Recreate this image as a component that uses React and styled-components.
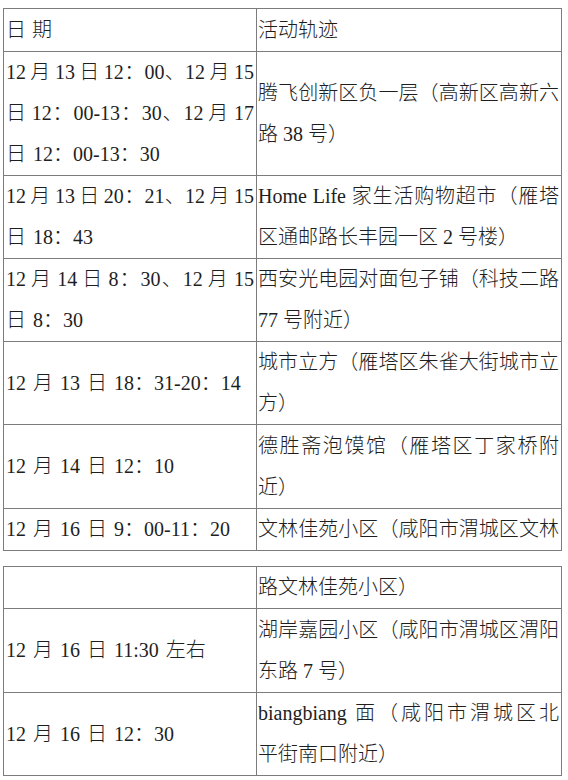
import React from "react";
import styled, { createGlobalStyle } from "styled-components";

const GlobalStyle = createGlobalStyle`
  html, body { margin: 0; padding: 0; background: #ffffff; }
  body {
    font-family: "Liberation Serif", "Noto Sans CJK SC", serif;
    color: #1e1e1e;
  }
`;

const Page = styled.div`
  width: 568px;
  height: 780px;
  box-sizing: border-box;
  padding: 8px 0 0 3px;
  display: flex;
  flex-direction: column;
  gap: 15px;
  overflow: hidden;
`;

const Sheet = styled.div`
  display: grid;
  grid-template-columns: 252px 304px;
  gap: 1px;
  width: max-content;
  background: #7c7c7c;
  border: 1px solid #7c7c7c;
`;

const Cell = styled.div`
  background: #ffffff;
  display: flex;
  flex-direction: column;
  justify-content: center;
  min-height: ${(p) => p.$min || 41}px;
  box-sizing: border-box;
  min-width: 0;
`;

const DateCell = styled(Cell)`
  padding: 0 2px 0 2px;
`;

const PlaceCell = styled(Cell)`
  padding: 0 2px 0 1px;
`;

const Line = styled.span`
  display: block;
  white-space: nowrap;
  font-size: 20px;
  font-weight: 300;
  line-height: 41px;
  text-align: left;
  text-align-last: ${(p) => (p.$full ? "justify" : "auto")};
  word-spacing: ${(p) => p.$ws || 0}px;
  letter-spacing: ${(p) => p.$ls || 0}px;
`;

const L = (text, full = false, ls = 0) => ({ text, full, ls });

const first = [
  {
    min: 42,
    date: [L("日期", false, 6)],
    place: [L("活动轨迹")],
  },
  {
    date: [
      L("12 月 13 日 12：00、12 月 15", true),
      L("日 12：00-13：30、12 月 17", true),
      L("日 12：00-13：30"),
    ],
    place: [L("腾飞创新区负一层（高新区高新六", true), L("路 38 号）")],
  },
  {
    date: [L("12 月 13 日 20：21、12 月 15", true), L("日 18：43")],
    place: [L("Home Life 家生活购物超市（雁塔", true), L("区通邮路长丰园一区 2 号楼）")],
  },
  {
    date: [L("12 月 14 日 8：30、12 月 15", true), L("日 8：30")],
    place: [L("西安光电园对面包子铺（科技二路", true), L("77 号附近）")],
  },
  {
    date: [L("12 月 13 日 18：31-20：14")],
    place: [L("城市立方（雁塔区朱雀大街城市立", true), L("方）")],
  },
  {
    min: 83,
    date: [L("12 月 14 日 12：10")],
    place: [L("德胜斋泡馍馆（雁塔区丁家桥附", true), L("近）")],
  },
  {
    date: [L("12 月 16 日 9：00-11：20")],
    place: [L("文林佳苑小区（咸阳市渭城区文林", true)],
  },
];

const second = [
  {
    date: [],
    place: [L("路文林佳苑小区）")],
  },
  {
    min: 83,
    date: [L("12 月 16 日 11:30 左右")],
    place: [L("湖岸嘉园小区（咸阳市渭城区渭阳", true), L("东路 7 号）")],
  },
  {
    min: 81,
    date: [L("12 月 16 日 12：30")],
    place: [L("biangbiang 面（咸阳市渭城区北", true), L("平街南口附近）")],
  },
];

function Rows({ rows }) {
  return rows.map((row, i) => (
    <React.Fragment key={i}>
      <DateCell $min={row.min}>
        {row.date.map((l, j) => (
          <Line key={j} $full={l.full} $ls={l.ls} $ws={l.full ? -1 : 2}>
            {l.text}
          </Line>
        ))}
      </DateCell>
      <PlaceCell $min={row.min}>
        {row.place.map((l, j) => (
          <Line key={j} $full={l.full} $ls={l.ls}>
            {l.text}
          </Line>
        ))}
      </PlaceCell>
    </React.Fragment>
  ));
}

export default function App() {
  return (
    <>
      <GlobalStyle />
      <Page>
        <Sheet>
          <Rows rows={first} />
        </Sheet>
        <Sheet>
          <Rows rows={second} />
        </Sheet>
      </Page>
    </>
  );
}
